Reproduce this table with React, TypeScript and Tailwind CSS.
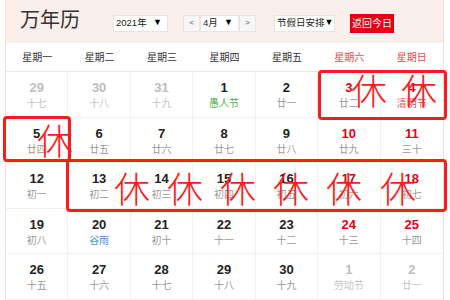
type Day = {
  n: number
  lunar: string
  muted?: boolean
  red?: boolean
  lunarColor?: string
}

const weekdays = ['星期一', '星期二', '星期三', '星期四', '星期五', '星期六', '星期日']

const rows: Day[][] = [
  [
    { n: 29, lunar: '十七', muted: true },
    { n: 30, lunar: '十八', muted: true },
    { n: 31, lunar: '十九', muted: true },
    { n: 1, lunar: '愚人节', lunarColor: 'text-[#4caf3c]' },
    { n: 2, lunar: '廿一' },
    { n: 3, lunar: '廿二', red: true },
    { n: 4, lunar: '清明节', red: true, lunarColor: 'text-[#e8575a]' },
  ],
  [
    { n: 5, lunar: '廿四' },
    { n: 6, lunar: '廿五' },
    { n: 7, lunar: '廿六' },
    { n: 8, lunar: '廿七' },
    { n: 9, lunar: '廿八' },
    { n: 10, lunar: '廿九', red: true },
    { n: 11, lunar: '三十', red: true },
  ],
  [
    { n: 12, lunar: '初一' },
    { n: 13, lunar: '初二' },
    { n: 14, lunar: '初三' },
    { n: 15, lunar: '初四' },
    { n: 16, lunar: '初五' },
    { n: 17, lunar: '初六', red: true },
    { n: 18, lunar: '初七', red: true },
  ],
  [
    { n: 19, lunar: '初八' },
    { n: 20, lunar: '谷雨', lunarColor: 'text-[#4a94d6]' },
    { n: 21, lunar: '初十' },
    { n: 22, lunar: '十一' },
    { n: 23, lunar: '十二' },
    { n: 24, lunar: '十三', red: true },
    { n: 25, lunar: '十四', red: true },
  ],
  [
    { n: 26, lunar: '十五' },
    { n: 27, lunar: '十六' },
    { n: 28, lunar: '十七' },
    { n: 29, lunar: '十八' },
    { n: 30, lunar: '十九' },
    { n: 1, lunar: '劳动节', muted: true },
    { n: 2, lunar: '廿一', muted: true },
  ],
]

const rowHeights = ['h-[46px]', 'h-[45px]', 'h-[46px]', 'h-[45px]', 'h-[46px]']

// hand-drawn "休" marks over the calendar
const marks = [
  { x: 'left-[351px]', y: 'top-[71px]' },
  { x: 'left-[401px]', y: 'top-[71px]' },
  { x: 'left-[37px]', y: 'top-[121px]' },
  { x: 'left-[114px]', y: 'top-[169px]' },
  { x: 'left-[167px]', y: 'top-[169px]' },
  { x: 'left-[220px]', y: 'top-[169px]' },
  { x: 'left-[273px]', y: 'top-[169px]' },
  { x: 'left-[326px]', y: 'top-[169px]' },
  { x: 'left-[380px]', y: 'top-[169px]' },
]

const cjk = "font-['Liberation_Sans','Noto_Sans_CJK_SC',sans-serif]"

function Select({ label, width }: { label: string; width: string }) {
  return (
    <div
      className={`flex h-[17px] ${width} items-center justify-between whitespace-nowrap border border-[#ebe3e2] bg-white pl-[2px] pr-[5px] text-[9.5px] text-[#222]`}
    >
      <span>{label}</span>
      <span className="text-[9px] text-black">▼</span>
    </div>
  )
}

export default function App() {
  return (
    <div className={`relative h-[300px] w-[450px] overflow-hidden bg-white ${cjk}`}>
      <div className="ml-[5px] w-[439px] border-x border-[#f3e0dd]">
        <div className="flex h-[43px] items-center bg-[#fbefec]">
          <h1 className="mb-[3px] ml-[14px] text-[20px] leading-none text-[#333]">万年历</h1>
          <div className="ml-[33px] mt-[3px] flex items-center">
            <Select label="2021年" width="w-[55px]" />
            <div className="ml-[15px] flex">
              <button className="flex h-[17px] w-[17px] items-center justify-center border border-[#ebe3e2] bg-[#f6f6f6] text-[8px] text-[#555]">
                &lt;
              </button>
              <Select label="4月" width="w-[39px]" />
              <button className="flex h-[17px] w-[17px] items-center justify-center border border-[#ebe3e2] bg-[#f6f6f6] text-[8px] text-[#555]">
                &gt;
              </button>
            </div>
            <div className="ml-[18px]">
              <Select label="节假日安排" width="w-[61px]" />
            </div>
            <button className="ml-[15px] flex h-[19px] w-[44px] items-center justify-center bg-[#e60012] text-[10px] text-white">
              返回今日
            </button>
          </div>
        </div>
        <div className="grid h-[29px] grid-cols-7 items-center border-b border-[#f6e4e1] text-center text-[10px]">
          {weekdays.map((w, i) => (
            <span key={w} className={i >= 5 ? 'text-[#e8464b]' : 'text-[#333]'}>
              {w}
            </span>
          ))}
        </div>
        {rows.map((row, r) => (
          <div key={r} className={`grid grid-cols-7 ${rowHeights[r]} border-b border-[#f0f0f0]`}>
            {row.map((d, c) => (
              <div
                key={c}
                className={`flex flex-col items-center pt-[8px] ${c < 6 ? 'border-r border-[#f0f0f0]' : ''}`}
              >
                <span
                  className={`text-[13px] font-bold leading-[15px] ${
                    d.muted ? 'text-[#bdbdbd]' : d.red ? 'text-[#e60012]' : 'text-[#222]'
                  }`}
                >
                  {d.n}
                </span>
                <span
                  className={`mt-[3px] text-[10px] leading-[12px] ${
                    d.muted ? 'text-[#c4c4c4]' : d.lunarColor ?? 'text-[#999]'
                  }`}
                >
                  {d.lunar}
                </span>
              </div>
            ))}
          </div>
        ))}
      </div>

      <div className="absolute left-[318px] top-[70px] h-[50px] w-[129px] rounded-[4px] border-[3px] border-[#ff1a1a]" />
      <div className="absolute left-[3px] top-[116px] h-[46px] w-[68px] rounded-[4px] border-[3px] border-[#ff1a1a]" />
      <div className="absolute left-[66px] top-[159px] h-[53px] w-[381px] rounded-[4px] border-[3px] border-[#ff1a1a]" />
      {marks.map((m, i) => (
        <span
          key={i}
          className={`absolute ${m.x} ${m.y} w-[36px] text-center font-['Noto_Sans_CJK_SC',sans-serif] text-[36px] font-light leading-none text-[#ff1a1a]`}
        >
          休
        </span>
      ))}
    </div>
  )
}
